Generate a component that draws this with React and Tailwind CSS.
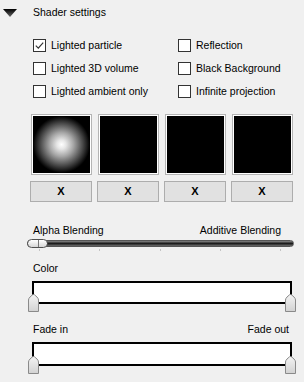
import React from "react";

const checks = [
  { label: "Lighted particle", checked: true },
  { label: "Reflection", checked: false },
  { label: "Lighted 3D volume", checked: false },
  { label: "Black Background", checked: false },
  { label: "Lighted ambient only", checked: false },
  { label: "Infinite projection", checked: false },
];

const Thumb = ({ className }) => (
  <svg className={className} width="11" height="18" viewBox="0 0 11 18">
    <defs>
      <linearGradient id="tg" x1="0" y1="0" x2="0" y2="1">
        <stop offset="0" stopColor="#f4f4f4" />
        <stop offset="1" stopColor="#d2d2d2" />
      </linearGradient>
    </defs>
    <path d="M0.5 6 Q0.5 4.5 2 3 L4.5 0.8 Q5.5 0 6.5 0.8 L9 3 Q10.5 4.5 10.5 6 V17.5 H0.5 Z" fill="url(#tg)" stroke="#8a8a8a" strokeWidth="1" />
  </svg>
);

const CheckBox = ({ label, checked }) => (
  <div className="flex items-center h-[23px]">
    <div className="w-[13px] h-[13px] border border-[#333333] bg-white flex items-center justify-center">
      {checked && (
        <svg width="11" height="11" viewBox="0 0 11 11">
          <path d="M1.8 5.6 L4.3 8.1 L9.2 2.6" fill="none" stroke="#333333" strokeWidth="1.2" />
        </svg>
      )}
    </div>
    <span className="ml-[5px] text-black">{label}</span>
  </div>
);

const App = () => {
  return (
    <div
      className="w-[304px] h-[382px] bg-[#f0f0f0] overflow-hidden flex flex-col text-[10.5px] leading-[13px] text-black"
      style={{ fontFamily: '"Liberation Sans", Arial, sans-serif' }}
    >
      <div className="mt-[6px] h-[13px] flex items-center">
        <svg className="ml-[3px]" width="14" height="8" viewBox="0 0 14 8">
          <defs>
            <linearGradient id="tri" x1="0" y1="0" x2="0" y2="1">
              <stop offset="0" stopColor="#000" />
              <stop offset="1" stopColor="#666" />
            </linearGradient>
          </defs>
          <polygon points="0,0 14,0 7,8" fill="url(#tri)" />
        </svg>
        <span className="ml-[16px]">Shader settings</span>
      </div>

      <div className="mt-[15px] pl-[33px] grid grid-cols-[145px_1fr]">
        {checks.map((c) => (
          <CheckBox key={c.label} label={c.label} checked={c.checked} />
        ))}
      </div>

      <div className="mt-[11px] pl-[30px] flex gap-[5px]">
        {[0, 1, 2, 3].map((i) => (
          <div key={i} className="w-[62px] flex flex-col">
            <div className="ml-[1px] w-[61px] h-[61px] border border-[#b4b4b4] p-[1px] bg-white">
              <div
                className={
                  i === 0
                    ? "w-full h-full bg-[radial-gradient(circle_closest-side,#ffffff_0%,#e6e6e6_16%,#a6a6a6_42%,#4a4a4a_74%,#0a0a0a_96%,#000000_100%)]"
                    : "w-full h-full bg-black"
                }
              />
            </div>
            <div className="mt-[6px] h-[21px] border border-[#adadad] bg-[#e1e1e1] flex items-center justify-center font-bold text-[11px]">
              X
            </div>
          </div>
        ))}
      </div>

      <div className="mt-[22px] h-[13px] pl-[33px] pr-[23px] flex justify-between">
        <span>Alpha Blending</span>
        <span>Additive Blending</span>
      </div>
      <div className="mt-[3px] ml-[27px] w-[267px] h-[8px] relative">
        <div className="w-full h-[7px] rounded-full bg-gradient-to-b from-[#8c8c8c] via-[#1c1c1c] to-[#707070] border border-[#555555]" />
        <div className="absolute left-0 top-[-1px] w-[21px] h-[9px] rounded-full border border-[#505050] bg-gradient-to-b from-white to-[#d6d6d6] flex items-center">
          <div className="ml-[10px] w-[1px] h-[7px] bg-[#777777]" />
        </div>
      </div>
      <div className="mt-[1px] ml-[39px] w-[242px] h-[3px] flex justify-between">
        {[0, 1, 2, 3, 4].map((i) => (
          <div key={i} className="w-[1px] h-[2px] bg-[#c4c4c4]" />
        ))}
      </div>

      <div className="mt-[10px] h-[13px] pl-[33px]">Color</div>
      <div className="mt-[6px] ml-[32px] w-[260px] h-[23px] border-2 border-black bg-white relative">
        <Thumb className="absolute left-[-6px] top-[11px]" />
        <Thumb className="absolute right-[-6px] top-[11px]" />
      </div>

      <div className="mt-[19px] h-[13px] pl-[33px] pr-[15px] flex justify-between">
        <span>Fade in</span>
        <span>Fade out</span>
      </div>
      <div className="mt-[6px] ml-[32px] w-[260px] h-[24px] border-2 border-black bg-white relative">
        <Thumb className="absolute left-[-6px] top-[12px]" />
        <Thumb className="absolute right-[-6px] top-[12px]" />
      </div>
    </div>
  );
};

export default App;
